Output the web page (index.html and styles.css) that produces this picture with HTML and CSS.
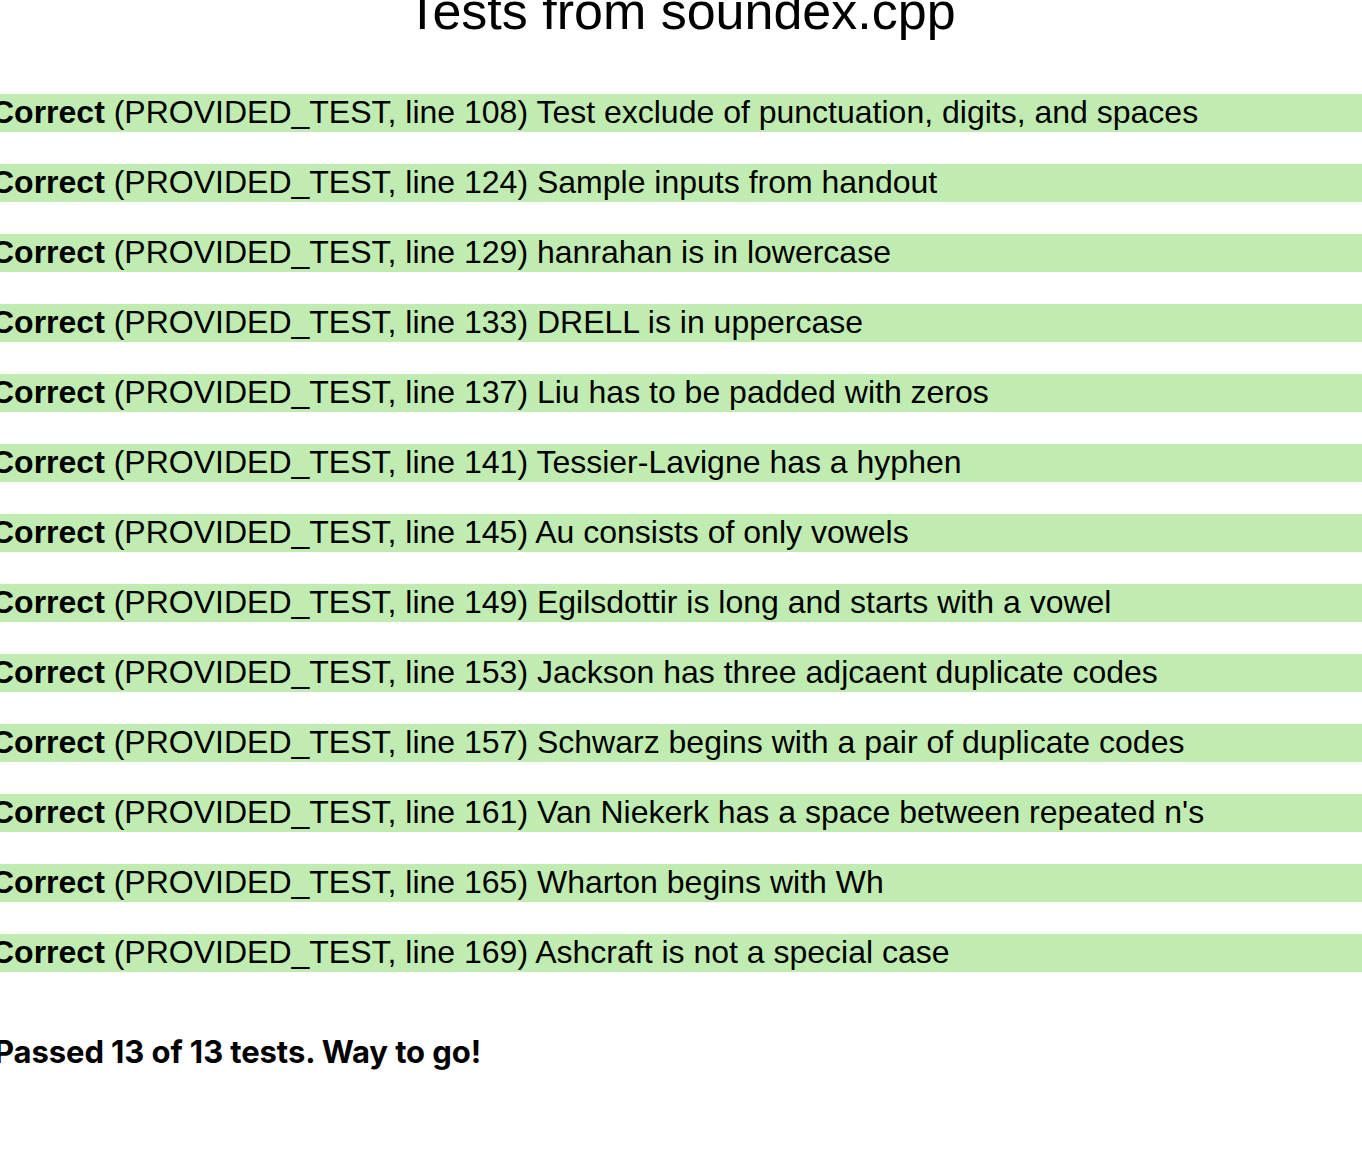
FILE: index.html
```html
<!DOCTYPE html>
<html>
<head>
<meta charset="utf-8">
<link rel="stylesheet" href="styles.css">
</head>
<body>
<div class="page">
  <h1 class="title">Tests from soundex.cpp</h1>
  <div class="tests">
    <div class="row"><b>Correct</b> (PROVIDED_TEST, line 108) Test exclude of punctuation, digits, and spaces</div>
    <div class="row"><b>Correct</b> (PROVIDED_TEST, line 124) Sample inputs from handout</div>
    <div class="row"><b>Correct</b> (PROVIDED_TEST, line 129) hanrahan is in lowercase</div>
    <div class="row"><b>Correct</b> (PROVIDED_TEST, line 133) DRELL is in uppercase</div>
    <div class="row"><b>Correct</b> (PROVIDED_TEST, line 137) Liu has to be padded with zeros</div>
    <div class="row"><b>Correct</b> (PROVIDED_TEST, line 141) Tessier-Lavigne has a hyphen</div>
    <div class="row"><b>Correct</b> (PROVIDED_TEST, line 145) Au consists of only vowels</div>
    <div class="row"><b>Correct</b> (PROVIDED_TEST, line 149) Egilsdottir is long and starts with a vowel</div>
    <div class="row"><b>Correct</b> (PROVIDED_TEST, line 153) Jackson has three adjcaent duplicate codes</div>
    <div class="row"><b>Correct</b> (PROVIDED_TEST, line 157) Schwarz begins with a pair of duplicate codes</div>
    <div class="row"><b>Correct</b> (PROVIDED_TEST, line 161) Van Niekerk has a space between repeated n's</div>
    <div class="row"><b>Correct</b> (PROVIDED_TEST, line 165) Wharton begins with Wh</div>
    <div class="row"><b>Correct</b> (PROVIDED_TEST, line 169) Ashcraft is not a special case</div>
  </div>
  <p class="summary">Passed 13 of 13 tests. Way to go!</p>
</div>
</body>
</html>
```
FILE: styles.css
```css
html, body {
  margin: 0;
  padding: 0;
  background: #ffffff;
  color: #000000;
}

.page {
  overflow: hidden;
  font-family: "Liberation Sans", Arial, sans-serif;
}

.title {
  margin: -14px 0 0;
  font-size: 52px;
  line-height: 50px;
  font-weight: normal;
  text-align: center;
}

.tests {
  display: flex;
  flex-direction: column;
  gap: 32px;
  margin-top: 58px;
}

.row {
  height: 38px;
  line-height: 36px;
  font-size: 32px;
  background: #c1ecb1;
  white-space: nowrap;
  text-indent: -9px;
}

.row b {
  font-weight: bold;
}

.summary {
  margin: 60px 0 0;
  font-family: Inter, "Liberation Sans", sans-serif;
  font-weight: 700;
  font-size: 31px;
  line-height: 40px;
  letter-spacing: -0.1px;
  text-indent: -6px;
}
```
